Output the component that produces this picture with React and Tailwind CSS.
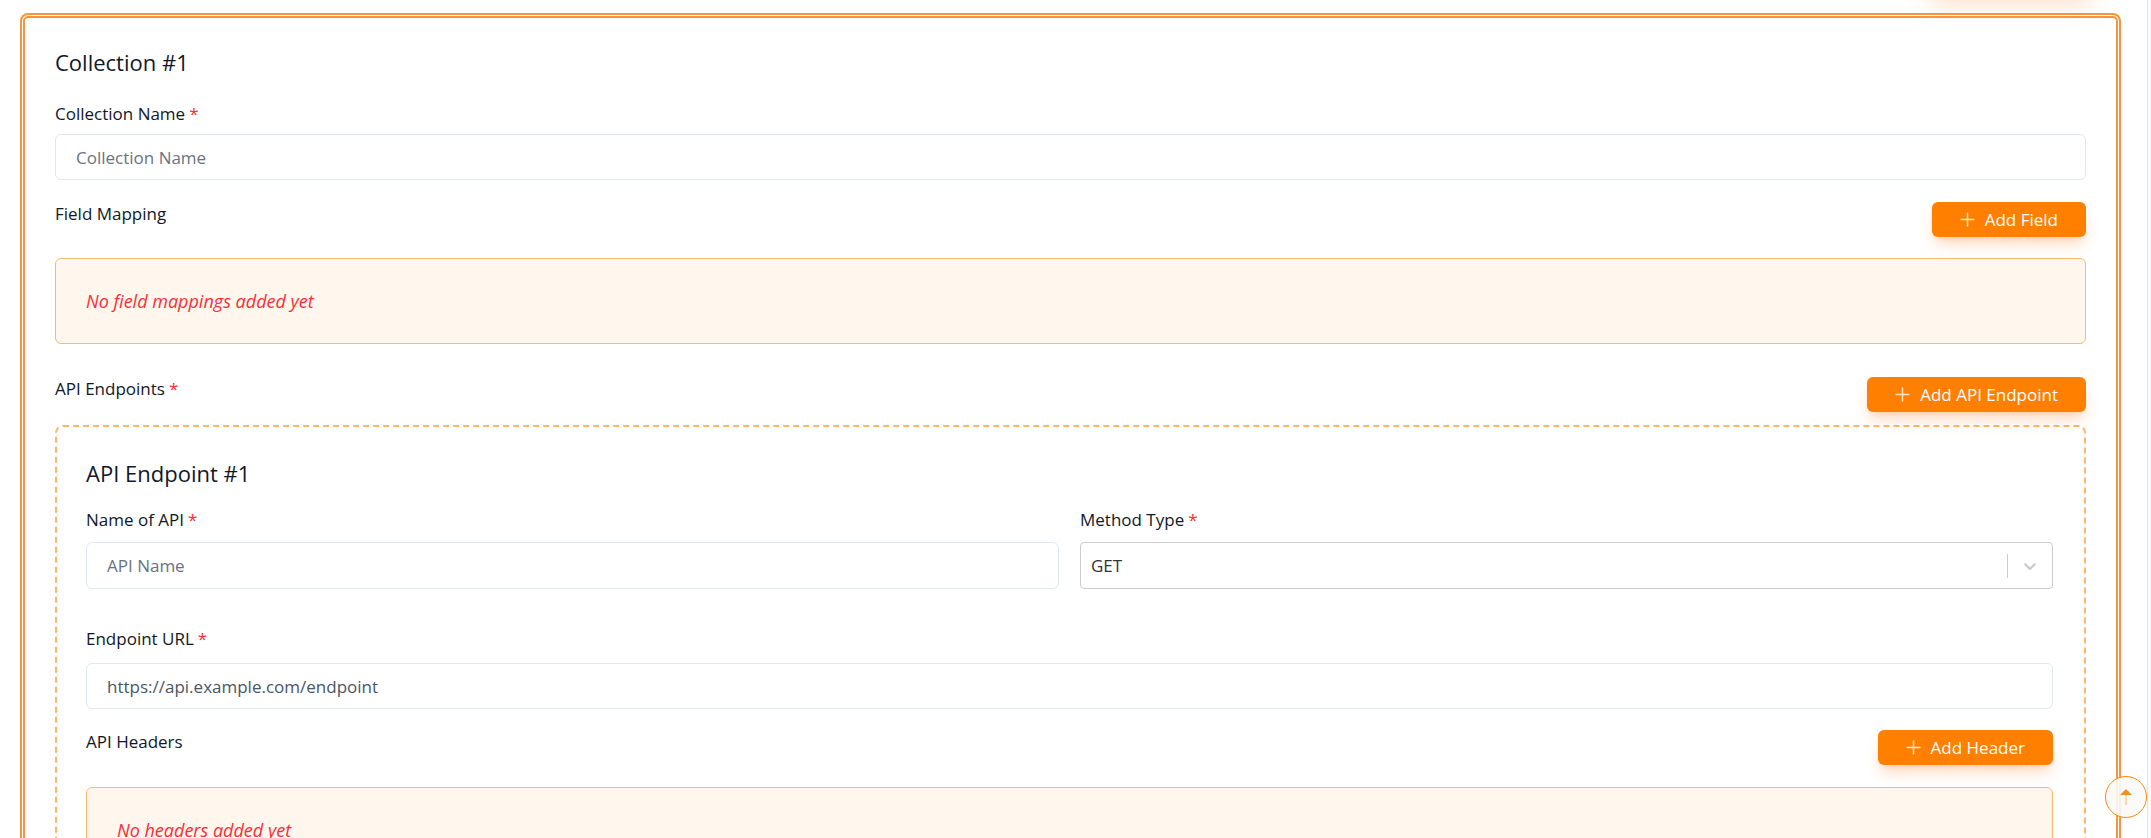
import React from "react";

const font = { fontFamily: '"Open Sans", "Noto Sans", Arial, sans-serif' };

function Plus() {
  return (
    <svg width="15" height="15" viewBox="0 0 14 14" className="opacity-80">
      <path d="M7 1v12M1 7h12" stroke="white" strokeWidth="1.4" strokeLinecap="round" />
    </svg>
  );
}

function AddButton({ children }) {
  return (
    <button className="flex h-[35px] items-center gap-2.5 rounded-md bg-[#ff7f00] px-[28px] text-[17px] font-medium text-white shadow-lg shadow-orange-500/25">
      <Plus />
      {children}
    </button>
  );
}

function Label({ children, required, className = "" }) {
  return (
    <label className={`block text-[17px] font-medium leading-6 text-gray-900 ${className}`}>
      {children}
      {required && <span className="ml-1 text-red-500">*</span>}
    </label>
  );
}

function EmptyBox({ children, className = "" }) {
  return (
    <div className={`rounded-md border border-orange-300 bg-orange-50 p-[30px] text-[18px] italic leading-6 text-red-500 ${className}`}>
      {children}
    </div>
  );
}

function TextInput({ placeholder, value, className = "" }) {
  return (
    <input
      readOnly
      placeholder={placeholder}
      defaultValue={value}
      className={`h-[46px] w-full rounded-md border border-slate-200 bg-white px-5 text-[17px] text-gray-600 outline-none placeholder:text-gray-500 ${className}`}
    />
  );
}

function MethodSelect() {
  return (
    <div className="mt-2.5 flex h-[47px] items-center rounded border border-[#cccccc] bg-white">
      <span className="flex-1 px-2.5 text-[17px] text-[#333333]">GET</span>
      <span className="h-6 w-px bg-[#cccccc]" />
      <span className="flex w-[44px] items-center justify-center">
        <svg width="20" height="20" viewBox="0 0 20 20" fill="#cccccc">
          <path d="M4.516 7.548c0.436-0.446 1.043-0.481 1.576 0l3.908 3.747 3.908-3.747c0.533-0.481 1.141-0.446 1.574 0 0.436 0.445 0.408 1.197 0 1.615-0.406 0.418-4.695 4.502-4.695 4.502-0.217 0.223-0.502 0.335-0.787 0.335s-0.57-0.112-0.789-0.335c0 0-4.287-4.084-4.695-4.502s-0.436-1.17 0-1.615z" />
        </svg>
      </span>
    </div>
  );
}

export default function App() {
  return (
    <div className="flex min-h-screen bg-white" style={font}>
      <div className="flex-1 pl-[20px] pr-[26px] pt-[13px]">
        {/* glow of the button scrolled off above */}
        <div className="flex h-0 justify-end pr-[25px]">
          <div className="-mt-[58px] h-[36px] w-[170px] rounded-md bg-[#ff7f00] shadow-xl shadow-orange-500/20" />
        </div>

        <div className="rounded-lg border-[5px] border-double border-[#f7953f] px-[30px] pb-10 pt-[30px]">
          <h2 className="text-[22px] leading-7 text-gray-900">Collection #1</h2>

          <Label required className="mt-[26px]">Collection Name</Label>
          <TextInput placeholder="Collection Name" className="mt-2" />

          <div className="mt-[22px] flex items-start justify-between">
            <Label>Field Mapping</Label>
            <AddButton>Add Field</AddButton>
          </div>
          <EmptyBox className="mt-[21px]">No field mappings added yet</EmptyBox>

          <div className="mt-[33px] flex items-start justify-between">
            <Label required>API Endpoints</Label>
            <AddButton>Add API Endpoint</AddButton>
          </div>

          <div className="mt-[13px] rounded-lg border-2 border-dashed border-orange-300 pb-10 pl-[29px] pr-[31px] pt-[32px]">
            <h3 className="text-[22px] leading-7 text-gray-900">API Endpoint #1</h3>

            <div className="mt-[21px] grid grid-cols-2 gap-x-[21px]">
              <div>
                <Label required>Name of API</Label>
                <TextInput placeholder="API Name" className="mt-2.5 h-[47px]" />
              </div>
              <div>
                <Label required>Method Type</Label>
                <MethodSelect />
              </div>
            </div>

            <Label required className="mt-[38px]">Endpoint URL</Label>
            <TextInput value="https://api.example.com/endpoint" className="mt-3 h-[45px]" />

            <div className="mt-[21px] flex items-start justify-between">
              <Label>API Headers</Label>
              <AddButton>Add Header</AddButton>
            </div>
            <EmptyBox className="mt-[22px]">No headers added yet</EmptyBox>
          </div>
        </div>
      </div>

      <div className="w-[4px] border-l border-gray-200 bg-gray-50" />

      <button className="fixed bottom-[20px] right-[4px] flex h-[42px] w-[42px] items-center justify-center rounded-full border border-orange-400 bg-[#fafafa]/90">
        <svg width="14" height="18" viewBox="0 0 14 18">
          <path d="M7 7v10" stroke="#fed7aa" strokeWidth="2" />
          <path d="M7 1l6 6H1z" fill="#fb8c1f" />
        </svg>
      </button>
    </div>
  );
}
